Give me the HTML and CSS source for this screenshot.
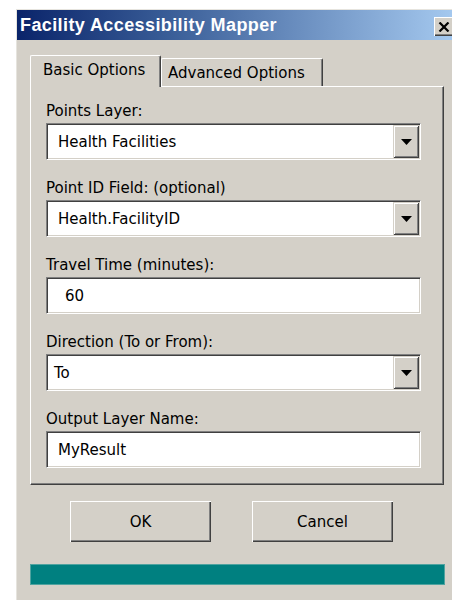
FILE: index.html
```html
<!DOCTYPE html>
<html lang="en">
<head>
<meta charset="utf-8">
<title>Facility Accessibility Mapper</title>
<link rel="stylesheet" href="styles.css">
</head>
<body>
<div class="window">
  <div class="titlebar">
    <span class="title">Facility Accessibility Mapper</span>
    <button class="close" type="button" aria-label="Close">
      <svg width="12" height="10" viewBox="0 0 12 10"><path d="M1.5 0.5 L10.5 9.5 M10.5 0.5 L1.5 9.5" stroke="#000" stroke-width="2.2" fill="none"/></svg>
    </button>
  </div>
  <div class="client">
    <div class="tabs">
      <div class="tab tab-active">Basic Options</div>
      <div class="tab">Advanced Options</div>
    </div>
    <div class="panel">
      <div class="field">
        <div class="label">Points Layer:</div>
        <div class="box">
          <span class="value">Health Facilities</span>
          <span class="drop"><svg width="11" height="6" viewBox="0 0 11 6"><path d="M0 0H11L5.5 6Z" fill="#000"/></svg></span>
        </div>
      </div>
      <div class="field">
        <div class="label">Point ID Field: (optional)</div>
        <div class="box">
          <span class="value">Health.FacilityID</span>
          <span class="drop"><svg width="11" height="6" viewBox="0 0 11 6"><path d="M0 0H11L5.5 6Z" fill="#000"/></svg></span>
        </div>
      </div>
      <div class="field">
        <div class="label">Travel Time (minutes):</div>
        <div class="box">
          <span class="value value-wide">60</span>
        </div>
      </div>
      <div class="field">
        <div class="label">Direction (To or From):</div>
        <div class="box">
          <span class="value value-narrow">To</span>
          <span class="drop"><svg width="11" height="6" viewBox="0 0 11 6"><path d="M0 0H11L5.5 6Z" fill="#000"/></svg></span>
        </div>
      </div>
      <div class="field">
        <div class="label">Output Layer Name:</div>
        <div class="box">
          <span class="value">MyResult</span>
        </div>
      </div>
    </div>
    <div class="actions">
      <button class="btn" type="button">OK</button>
      <button class="btn" type="button">Cancel</button>
    </div>
    <div class="progress"></div>
  </div>
</div>
</body>
</html>
```

FILE: styles.css
```css
html, body {
  margin: 0;
  padding: 0;
}

body {
  width: 452px;
  height: 600px;
  overflow: hidden;
  background: #fff;
  font-family: "DejaVu Sans", sans-serif;
  font-size: 15px;
  color: #000;
}

/* dialog frame */
.window {
  margin: 9px 0 0 16px;
  width: 441px;
  height: 591px;
  box-sizing: border-box;
  background: #d4d0c8;
  border-top: 1px solid #e6e4de;
  border-left: 1px solid #e6e4de;
}

.titlebar {
  height: 30px;
  display: flex;
  align-items: center;
  justify-content: space-between;
  padding-left: 3px;
  background: linear-gradient(to right, #0a246a 0%, #3a5e98 35%, #a6caf0 100%);
}

.title {
  color: #fff;
  font-family: "Liberation Sans", Arial, sans-serif;
  font-weight: bold;
  font-size: 18px;
  letter-spacing: 0.4px;
  white-space: nowrap;
}

.close {
  align-self: flex-start;
  margin: 7px 0 0 0;
  width: 23px;
  height: 19px;
  padding: 0 4px 0 0;
  border: 0;
  background: #d4d0c8;
  box-shadow: inset 1px 1px #fff, inset -1px -1px #404040, inset -2px -2px #808080;
  display: flex;
  align-items: center;
  justify-content: center;
}

.client {
  padding: 15px 12px 0 13px;
}

/* tab strip */
.tabs {
  display: flex;
  align-items: flex-end;
}

.tab {
  width: 162px;
  height: 28px;
  box-sizing: border-box;
  padding-left: 6px;
  display: flex;
  align-items: center;
  background: #d4d0c8;
  border-top: 1px solid #fff;
  border-left: 1px solid #fff;
  border-right: 1px solid #404040;
  border-radius: 2px 2px 0 0;
  box-shadow: inset -1px 0 #808080;
  white-space: nowrap;
}

.tab-active {
  width: 131px;
  height: 32px;
  margin-bottom: -1px;
  padding-left: 12px;
  padding-bottom: 3px;
  position: relative;
  z-index: 1;
}

/* tab page */
.panel {
  width: 414px;
  box-sizing: border-box;
  padding: 15px 0 16px 15px;
  display: flex;
  flex-direction: column;
  gap: 19px;
  border-top: 1px solid #fff;
  border-left: 1px solid #fff;
  border-right: 1px solid #404040;
  border-bottom: 1px solid #404040;
  box-shadow: inset -1px -1px #808080;
}

.field {
  display: flex;
  flex-direction: column;
  gap: 3px;
}

.label {
  line-height: 18px;
  white-space: nowrap;
}

.box {
  width: 375px;
  height: 37px;
  box-sizing: border-box;
  padding: 1px;
  display: flex;
  align-items: center;
  background: #fff;
  border: 1px solid;
  border-color: #808080 #fff #fff #808080;
  box-shadow: inset 1px 1px #404040, inset -1px -1px #d4d0c8;
}

.value {
  flex: 1;
  padding-left: 10px;
  white-space: nowrap;
}

.value-wide {
  padding-left: 17px;
}

.value-narrow {
  padding-left: 6px;
}

.drop {
  width: 26px;
  height: 33px;
  box-sizing: border-box;
  display: flex;
  align-items: center;
  justify-content: center;
  background: #d4d0c8;
  box-shadow: inset 1px 1px #d4d0c8, inset -1px -1px #404040, inset 2px 2px #fff, inset -2px -2px #808080;
}

/* dialog buttons */
.actions {
  display: flex;
  gap: 41px;
  margin-top: 16px;
  padding-left: 40px;
}

.btn {
  width: 141px;
  height: 41px;
  padding: 0;
  border: 0;
  background: #d4d0c8;
  font-family: "DejaVu Sans", sans-serif;
  font-size: 15px;
  color: #000;
  box-shadow: inset 1px 1px #fff, inset -1px -1px #404040, inset -2px -2px #808080;
}

.progress {
  margin-top: 22px;
  width: 415px;
  height: 21px;
  background: #008080;
  box-shadow: inset 0 0 0 1px #4fa3a0;
}
```
